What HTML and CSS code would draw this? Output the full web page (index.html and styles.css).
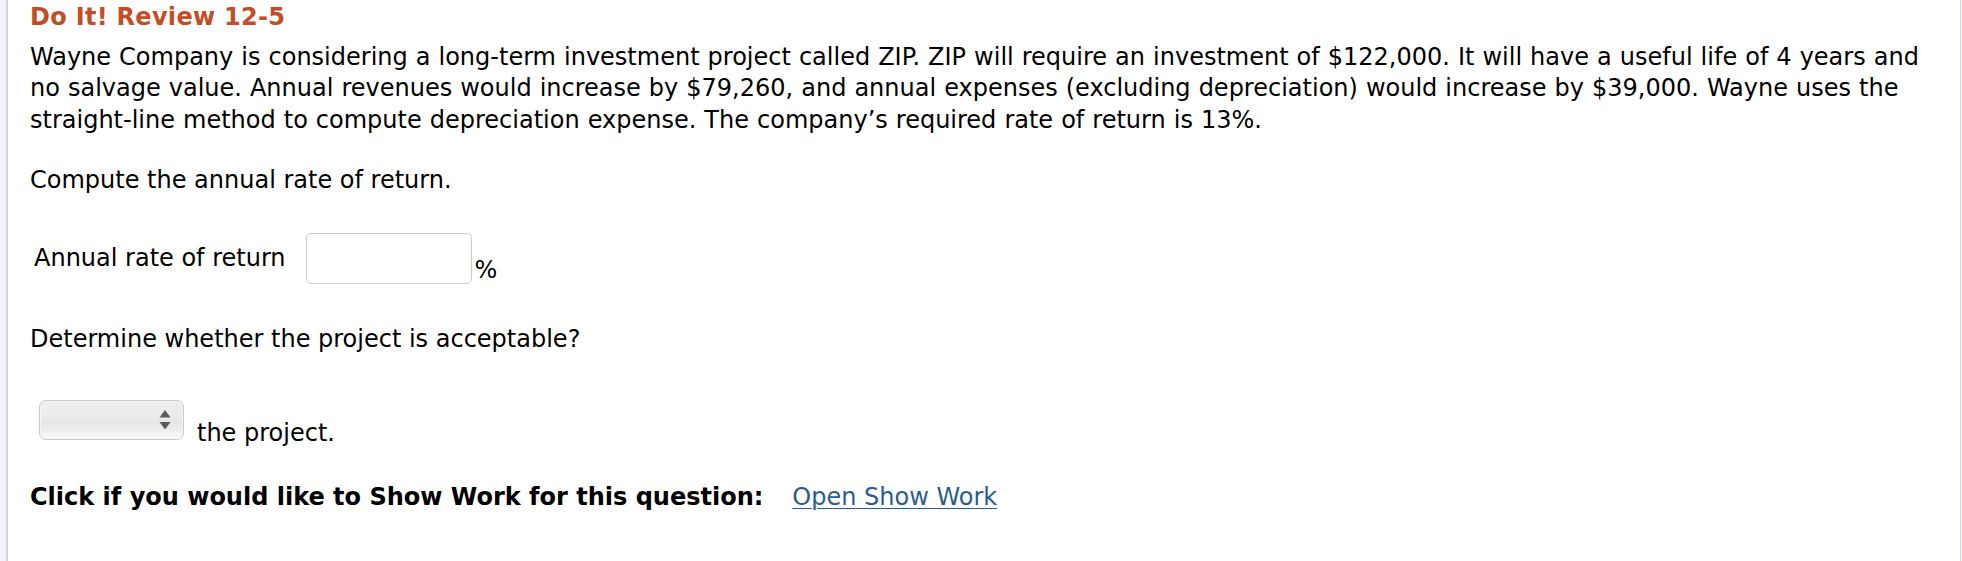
FILE: index.html
```html
<!DOCTYPE html>
<html lang="en">
<head>
<meta charset="utf-8">
<title>Do It! Review 12-5</title>
<link rel="stylesheet" href="styles.css">
</head>
<body>
<div class="panel">
  <h2 class="title">Do It! Review 12-5</h2>
  <p class="intro">Wayne Company is considering a long-term investment project called ZIP. ZIP will require an investment of $122,000. It will have a useful life of 4 years and no salvage value. Annual revenues would increase by $79,260, and annual expenses (excluding depreciation) would increase by $39,000. Wayne uses the straight-line method to compute depreciation expense. The company’s required rate of return is 13%.</p>
  <p class="task">Compute the annual rate of return.</p>
  <div class="answer-row">
    <span class="label">Annual rate of return</span>
    <span class="field-group">
      <input class="field" type="text" aria-label="Annual rate of return">
      <span class="unit">%</span>
    </span>
  </div>
  <p class="task task-2">Determine whether the project is acceptable?</p>
  <div class="select-row">
    <span class="select-wrap">
      <select class="choice" aria-label="Accept or reject">
        <option></option>
        <option>Accept</option>
        <option>Reject</option>
      </select>
      <svg class="arrows" width="12" height="20" viewBox="0 0 12 20" aria-hidden="true">
        <path d="M6 0 L11.5 7.5 L0.5 7.5 Z" fill="#5b5b5b"/>
        <path d="M6 19.5 L11.5 12 L0.5 12 Z" fill="#5b5b5b"/>
      </svg>
    </span>
    <span class="after">the project.</span>
  </div>
  <p class="showwork"><strong>Click if you would like to Show Work for this question:</strong><a class="link" href="#">Open Show Work</a></p>
</div>
</body>
</html>
```

FILE: styles.css
```css
html, body {
  margin: 0;
  padding: 0;
}

body {
  background: #f2f5f9;
  font-family: "DejaVu Sans", Verdana, sans-serif;
  font-size: 24px;
  color: #000;
}

.panel {
  margin-left: 6px;
  margin-right: 1px;
  min-height: 561px;
  box-sizing: border-box;
  background: #fff;
  border-left: 2px solid #cdd6e1;
  border-right: 1px solid #cdd6e1;
  padding: 2px 10px 0 22px;
}

.title {
  margin: 0;
  font-size: 24px;
  line-height: 31px;
  font-weight: bold;
  letter-spacing: 0.3px;
  color: #c24e28;
}

.intro {
  margin: 9px 0 0 0;
  line-height: 31.3px;
  word-spacing: 0.4px;
}

.task {
  margin: 29px 0 0 0;
  line-height: 31px;
}

.answer-row {
  display: flex;
  align-items: center;
  margin-top: 37px;
  padding-left: 4px;
}

.label {
  line-height: 31px;
  margin-right: 20px;
}

.field-group {
  display: flex;
  align-items: flex-end;
}

.field {
  width: 166px;
  height: 51px;
  box-sizing: border-box;
  border: 1.5px solid #cbcbcb;
  border-radius: 5px;
  background: #fff;
  font: inherit;
  padding: 0 6px;
  margin: 0 3px 0 0;
}

.unit {
  line-height: normal;
}

.task-2 {
  margin-top: 40px;
}

.select-row {
  display: flex;
  align-items: flex-end;
  margin-top: 45px;
  padding-left: 9px;
}

.select-wrap {
  position: relative;
  display: inline-block;
  margin-right: 13px;
}

.choice {
  appearance: none;
  -webkit-appearance: none;
  display: block;
  width: 145px;
  height: 40px;
  box-sizing: border-box;
  border: 1px solid #c9c9c9;
  border-radius: 7px;
  background: linear-gradient(to bottom, #efefef 0%, #ebebeb 45%, #e6e6e6 55%, #f1f1f1 82%, #fbfbfb 100%);
  box-shadow: inset 0 0 0 1px #f7f7f7;
  font: inherit;
  font-size: 16px;
  margin: 0;
}

.arrows {
  position: absolute;
  right: 13px;
  top: 10px;
  pointer-events: none;
}

.after {
  line-height: 24px;
  margin-bottom: -5px;
}

.showwork {
  margin: 42px 0 0 0;
  line-height: 31px;
}

.showwork strong {
  font-weight: bold;
}

.link {
  margin-left: 29px;
  color: #2c5d8d;
  text-decoration: underline;
  text-underline-offset: 3px;
  text-decoration-thickness: 1px;
}
```
